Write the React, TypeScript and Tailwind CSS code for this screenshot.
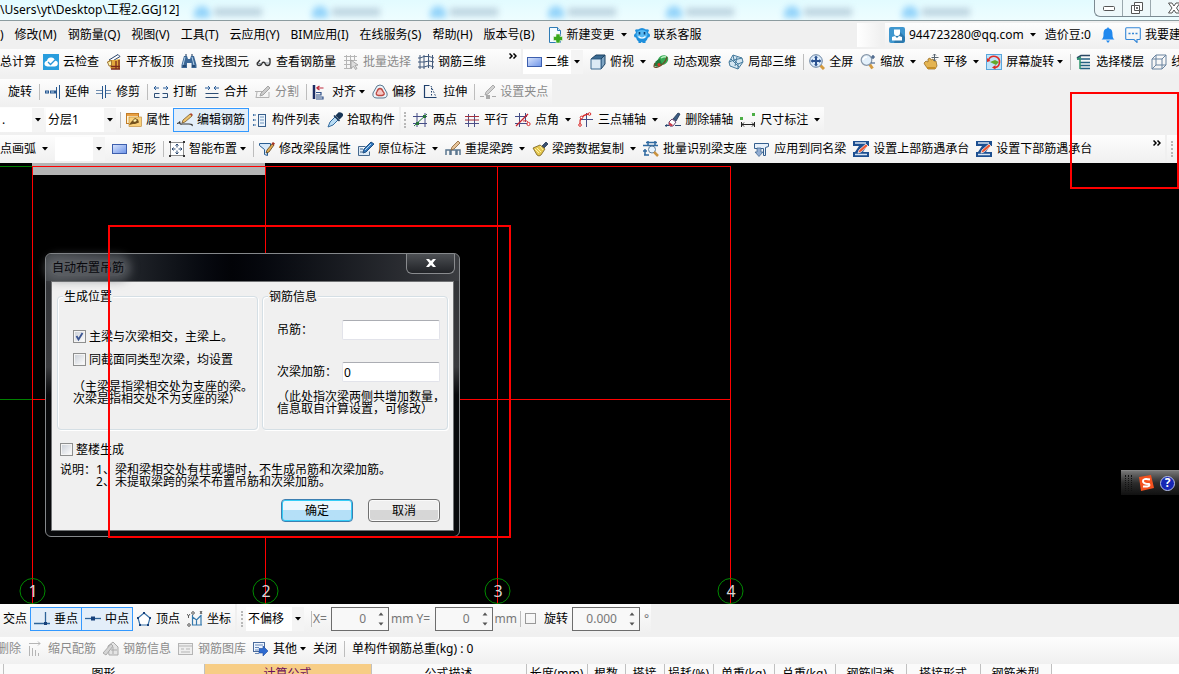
import { useState } from 'react';
import type { ReactNode } from 'react';

// 16x16 toolbar drawings
const icons: Record<string, ReactNode> = {
    newChange: (
        <>
            <path d="M2.500 .5h8l3 3v12h-11z" fill="#f4fbff" stroke="#2f7bb5" />
            <path d="M10.500 .5v3h3" fill="#cfe6f5" stroke="#2f7bb5" />
            <path d="M9 7h4v2.500h2.500v4H13V16H9v-2.500H6.500v-4H9z" fill="#3aa81c" stroke="#e9f7e4" strokeWidth=".6" />
        </>
    ),
    service: (
        <>
            <path d="M1 3q1.500-1 3-.5 4-3 8 0 1.500-.5 3 .5l-1 3q2.500 1 2 3-.5 1.500-2 1.500-1 3-2.500 4V16h-3v-.8H7V16H4.500v-1.500Q2.500 13 2 10.500.3 10.500 0 9q-.3-2 2-3z" fill="#1e8fdc" />
            <ellipse cx="8" cy="7.500" rx="5.500" ry="4.500" fill="#57b9f2" />
            <path d="M5.500 5v2.500M10.500 5v2.500" stroke="#083e73" strokeWidth="1.600" />
            <path d="M4.500 9.500q3.500 3 7 0" fill="none" stroke="#fff" strokeWidth="1.200" />
        </>
    ),
    user: (
        <>
            <rect width="16" height="16" rx="2" fill="#3f97cf" />
            <path d="M9 3l7 7v4l-2 2H5z" fill="#2c79ad" />
            <path d="M5 2.500h6V6q0 3-3 3T5 6z" fill="#fff" />
            <path d="M3 13.500V10l3-1 2 2 2-2 3 1v3.500z" fill="#fff" />
        </>
    ),
    bell: <path d="M8 0l1 1.500c3 .5 3.500 3 3.500 6 0 2.500.5 4 2 5H1.500c1.500-1 2-2.500 2-5 0-3 .5-5.500 3.500-6zM6 13.500h4L8 16z" fill="#2088ee" />,
    chat: (
        <>
            <path d="M3 .8H1.500Q.7.8.7 2v9.500q0 1 1 1H9l3 3v-3h2.300q1 0 1-1V2q0-1.200-1-1.200H3z" fill="none" stroke="#3487d8" strokeWidth="1.100" />
            <path d="M3.500 6.500h2M7 6.500h2M10.500 6.500h2" stroke="#3487d8" strokeWidth="1.300" />
        </>
    ),
    cloudCheck: (
        <>
            <rect width="16" height="16" fill="#299ddd" />
            <path d="M4.500 12.500Q1 12 1.500 9q.5-2 2.500-2.300Q5 3 8.500 3.500q2.500 0 3.500 3 3 .5 2.800 3.300-.3 2.700-3.300 2.700z" fill="#fff" />
            <path d="M5 8l2.500 2.500L12 6" fill="none" stroke="#2a95d8" strokeWidth="1.300" />
        </>
    ),
    alignTop: (
        <>
            <path d="M3 6L12 .5l2 2L5 8z" fill="#fff" stroke="#27426b" />
            <path d="M1 8l3-2h5l5-1v10H5l-2-4z" fill="#e2a83c" />
            <path d="M1.500 8l4-1.500v5L3 12z" fill="#fff2a8" stroke="#7c501e" strokeWidth=".7" />
            <path d="M5 12.500h9M5 15h9M10 7v8M13 6v9" stroke="#7c2a1c" strokeWidth="1.300" />
        </>
    ),
    binoculars: (
        <>
            <path d="M3 2h3l1 3h2l1-3h3l2.500 9v3h-5V9H6v5H.500v-3z" fill="#3b6796" />
            <path d="M4 3L2 11M11 3l2 8" stroke="#b5d1e9" />
            <path d="M2 12h3M11 12h3M4 1h2M10 1h2" stroke="#102f55" />
        </>
    ),
    glasses: (
        <>
            <path d="M1.500 8.500Q.5 11.500 3 11.500T6 9M1.500 9l2.500-3M9 8.500q0 3 2.500 3T14 8.500M6 9q1.500-1.500 3 0M14 9V5l-1.500-.5" fill="none" stroke="#333" strokeWidth="1.400" />
            <path d="M2 9.500h3.500M9.500 9h4" stroke="#8a97a5" />
        </>
    ),
    batchSelect: (
        <>
            <path d="M1 2.500h13M1 6.500h13M1 10.500h8M1 14.500h8M3.500 1v14M7.500 1v14M11.500 1v6" stroke="#b5b5b5" />
            <path d="M8 6l7 5-3 .5 2 3-1.500 1-1.800-3L8 14z" fill="#ddd" stroke="#999" strokeWidth=".8" />
        </>
    ),
    rebar3d: (
        <>
            <path d="M2 1v14M6 1v14M10.500 0v14M14.500 1v14" stroke="#41597b" />
            <path d="M0 4h2l4-1.500h5L16 4M0 8h6l5-1 5 1M0 13h6l5-1.500L16 13" fill="none" stroke="#41597b" />
        </>
    ),
    rect: (
        <>
            <defs>
                <linearGradient id="blueRect" x1="0" y1="0" x2="1" y2="1">
                    <stop offset="0" stopColor="#dbe6fc" />
                    <stop offset="1" stopColor="#6b92e8" />
                </linearGradient>
            </defs>
            <rect x=".5" y="3.500" width="14" height="9" fill="url(#blueRect)" stroke="#3d5fae" />
        </>
    ),
    cube: (
        <>
            <path d="M1 5l5-4h9l-4 4z" fill="#3a6a92" stroke="#1d4262" />
            <path d="M11 5l4-4v9l-4 5z" fill="#7ea4c2" stroke="#1d4262" />
            <path d="M1 5h10v10H1z" fill="#dceaf5" stroke="#3c6b92" />
        </>
    ),
    orbit: (
        <>
            <ellipse cx="10" cy="6" rx="5.500" ry="4.500" transform="rotate(-35 10 6)" fill="#35a852" />
            <path d="M8 4q3-2 5-1" fill="none" stroke="#baf0c0" strokeWidth="1.500" />
            <path d="M1 12q1-6 6-7l2 5q-2 4-8 2z" fill="#207b3b" />
            <path d="M2 9Q-1 15 5 13q7-3 9-10" fill="none" stroke="#6d4b28" strokeWidth="1.200" />
            <circle cx="6" cy="10.500" r="1.600" fill="#d93526" />
        </>
    ),
    local3d: (
        <>
            <path d="M1 8l4-7 9 3 1 4-5 7-8-3z" fill="#d4e6f2" stroke="#467b9d" />
            <path d="M5 1l1 5-5 2M6 6l8-2M6 6l4 4 5-2M10 10v5M9 3L7 12M3 5l8 8" fill="none" stroke="#467b9d" />
        </>
    ),
    fullScreen: (
        <>
            <path d="M11 11l4 4" stroke="#d49a3e" strokeWidth="3" />
            <circle cx="7" cy="7" r="6.300" fill="#dcebfa" stroke="#6882a0" />
            <path d="M7 1.500l2 2.300H8V6h2.200V5l2.300 2-2.300 2V8H8v2.200h1l-2 2.300-2-2.300h1V8H3.800v1L1.500 7l2.300-2v1H6V3.800H5z" fill="#2b5290" />
        </>
    ),
    zoomTool: (
        <>
            <path d="M9.500 10l3 4.500" stroke="#d49a3e" strokeWidth="3" />
            <circle cx="6.500" cy="6" r="5.300" fill="#e3f0fb" stroke="#8797a9" strokeWidth="1.200" />
            <path d="M3 6q1-3 4-3" fill="none" stroke="#fff" strokeWidth="1.500" />
            <path d="M11 3h4M13 1v4M11 9h4" stroke="#2b4d78" strokeWidth="1.200" />
        </>
    ),
    pan: (
        <>
            <path d="M1 9l2-2 2 1 0-3 2-1 1 2 2-1 1 2 2 0 1 5-2 3H5L2 11z" fill="#e4b452" stroke="#9a7026" strokeWidth=".8" />
            <path d="M4 13h8l1 2H4z" fill="#c58e28" />
            <path d="M11.500 0v7M8.500 3.500h7M10 1.500L11.500 0 13 1.500M10 5.500L11.500 7 13 5.500" fill="none" stroke="#56636f" />
        </>
    ),
    screenRotate: (
        <>
            <rect x=".5" y=".5" width="15" height="15" fill="#bfe3fa" stroke="#5aa6dc" />
            <path d="M4 8l5-2 4 2-3 3z" fill="#64a92c" />
            <path d="M2.500 6q2-4.500 7-3.500 4.500 1.500 4 6T9 13.500" fill="none" stroke="#e02b24" strokeWidth="1.600" />
            <path d="M9.500 11v4.500L6 13.500zM1 4l3.500 3L1 8z" fill="#e02b24" />
        </>
    ),
    floors: (
        <>
            <path d="M1 4l4-2.500h9" fill="none" stroke="#2b4864" strokeWidth="1.600" />
            <path d="M1 5h13M4 8.500h10M4 11.500h10M4 14.500h10" fill="none" stroke="#266083" strokeWidth="1.500" />
            <path d="M1 5l4-1.500M4 5v10" stroke="#2c956b" strokeWidth="1.500" />
        </>
    ),
    wireCube: (
        <path d="M1 5h10v10H1zM1 5l4-4h10L11 5M15 1v10l-4 4M5 1v10h10M5 11l-4 4" fill="none" stroke="#69839f" />
    ),
    extend: (
        <>
            <path d="M0 8h4M5 8h6" stroke="#27578f" strokeWidth="3" />
            <path d="M1 8h2M6 8h3" stroke="#b9d5ee" />
            <path d="M11.500 3v11M14.500 1v14" stroke="#27578f" />
        </>
    ),
    trim: (
        <>
            <path d="M0 6.500h6M0 9.500h6M10 6.500h5M10 9.500h5" stroke="#6e8caf" />
            <path d="M6.500 2v13M9.500 1v13" stroke="#27578f" />
        </>
    ),
    breakTool: (
        <>
            <path d="M1 4h5M10 4h5M3 2L1 4l2 2M13 2l2 2-2 2" fill="none" stroke="#2c5f9a" />
            <path d="M6.500 9.500h-5v4h5M9.500 9.500h5v4h-5" fill="#eef4fa" stroke="#2d4d74" />
        </>
    ),
    merge: (
        <>
            <path d="M1 4h5M10 4h5M4 2l2 2-2 2M12 2l-2 2 2 2" fill="none" stroke="#2c5f9a" />
            <path d="M1.500 9.500h13M1.500 13.500h13" stroke="#2d4d74" />
        </>
    ),
    split: (
        <>
            <path d="M0 7.500h7M1 13.500h13V8M2 8l-1 6" fill="none" stroke="#b3b3b3" />
            <path d="M5 12l1-3 7-7 2 2-7 7z" fill="#ccc" stroke="#a5a5a5" />
        </>
    ),
    align: (
        <>
            <path d="M2 1v14" stroke="#1c2d64" strokeWidth="2.500" />
            <path d="M4.500 4h7M4.500 4l3-2M4.500 4l3 2" stroke="#bd2b3c" strokeWidth="1.200" />
            <path d="M4 8.500h5v2.500H4M4 13h7v2H4" fill="none" stroke="#31528a" strokeWidth="1.200" />
        </>
    ),
    offset: (
        <>
            <path d="M5 2q3-2 6 0l4 7q1 5-4 5H5Q0 14 1 9z" fill="#edf4fa" stroke="#5a7991" />
            <path d="M8 4.500q2 0 3 3 3 3-1 4H6q-3-1-1-4 1-3 3-3z" fill="#f7c8c6" stroke="#bd4841" strokeWidth="1.300" />
        </>
    ),
    stretch: (
        <>
            <path d="M6.500 1.500h-5v12h12" fill="none" stroke="#1e3f6b" strokeWidth="1.200" />
            <path d="M8 2l5 11M8.500 4v9" stroke="#1e3f6b" strokeDasharray="1.500 1.500" />
        </>
    ),
    gripPoint: (
        <>
            <path d="M0 12.500h4M12 12.500h4" stroke="#aaa" />
            <path d="M6 8l7-7 2 2-7 7-3 1z" fill="#d2d2d2" stroke="#aaa" />
            <path d="M6 11h4v4H6z" fill="#aaa" />
        </>
    ),
    property: (
        <>
            <rect x=".5" y="1.500" width="12" height="10" fill="#fff2d0" stroke="#c27c27" />
            <path d="M1 3h11" stroke="#e89f41" strokeWidth="2" />
            <rect x="3" y="5" width="12.500" height="9.500" fill="#f9d07a" stroke="#b9812e" strokeWidth=".6" />
            <path d="M3 13l2-3 4-4 3 1.500 1 3-4 1.500-2 0z" fill="#75521d" />
            <path d="M7 9l2-2 2 1-2 2z" fill="#fff3b0" />
        </>
    ),
    editRebar: (
        <>
            <path d="M0 11.500q2 0 3-2-1 3 2 2.500h7q4 0 3 2" fill="none" stroke="#333" strokeWidth="1.200" />
            <path d="M5 11l1-3 7-6 2 2-7 6z" fill="#edc46d" stroke="#76582e" strokeWidth=".8" />
            <path d="M13 2l1-1 2 2-1 1z" fill="#b33e29" />
        </>
    ),
    list: (
        <>
            <path d="M1 3h3M1 8h3M1 13h3" stroke="#4576aa" strokeWidth="2" strokeDasharray="1.500 1" />
            <rect x="6.500" y="2.500" width="7" height="12" fill="#edf5fc" stroke="#385f8c" />
            <path d="M8 5h4M8 8h4M8 11h4" stroke="#7195bd" />
        </>
    ),
    dropper: (
        <>
            <path d="M1 15l2-5 5-5 3 3-5 5z" fill="#b9dcf4" stroke="#346c9f" />
            <path d="M7 3.500l5.500 5.500M9 4l3-3q2 0 3 1t-1 3l-2 2" fill="#173556" stroke="#173556" strokeWidth="1.500" />
        </>
    ),
    twoPoint: (
        <>
            <path d="M4 1v14M12 1v14M0 4.500h14M0 11.500h14" stroke="#444c86" />
            <path d="M1 14L14 2" stroke="#24753e" />
            <path d="M3 10h3v3H3zM10 3h3v3h-3z" fill="#27733a" />
        </>
    ),
    parallel: (
        <>
            <path d="M4.500 2v13M10.500 2v13M1 11.500h14" stroke="#4b4f88" />
            <path d="M1 4.500h14M1 8h14" stroke="#a52d39" />
        </>
    ),
    pointAngle: (
        <>
            <path d="M4.500 1v14M10.500 1v9M0 4.500h12M0 11.500h12" stroke="#444c86" />
            <path d="M1 14L13 2" stroke="#c5222e" strokeWidth="1.200" />
            <path d="M8 9q4-1 5 1" fill="none" stroke="#d92b2b" />
            <circle cx="13.500" cy="12" r="1.600" fill="#fff" stroke="#d92b2b" />
        </>
    ),
    threePoint: (
        <>
            <path d="M8.500 1v14M2 7.500h13" stroke="#444c86" />
            <path d="M2 12Q1 4 10 2" fill="none" stroke="#d92b2b" strokeWidth="1.300" />
            <circle cx="2" cy="13" r="1.300" fill="#fff" stroke="#d92b2b" />
            <circle cx="3.500" cy="5.500" r="1.300" fill="#fff" stroke="#d92b2b" />
            <circle cx="11.500" cy="2" r="1.300" fill="#fff" stroke="#d92b2b" />
        </>
    ),
    eraseAxis: (
        <>
            <path d="M0 13.500h5M10 13.500h6M2 12l-1 3" stroke="#29476f" />
            <path d="M8 7l5-6 2 1-4 7z" fill="#3b5c83" stroke="#1f3350" strokeWidth=".8" />
            <path d="M4 10l3-3 4 3-3 4q-3 1-4-1z" fill="#fff" stroke="#6a4a75" />
            <path d="M4 10l4 3-1 1q-3 0-3-2z" fill="#c93b48" />
        </>
    ),
    dimension: (
        <>
            <path d="M1.500 10v5M14.500 10v5M2 12.500h12M4 10.500l-2 2 2 2M12 10.500l2 2-2 2" fill="none" stroke="#222" />
            <path d="M0 5h3v3H0zM12 1h3v3h-3z" fill="#4cae45" />
        </>
    ),
    smart: (
        <>
            <rect x="1.500" y="1.500" width="13" height="13" fill="#fff" stroke="#222" strokeDasharray="1 1" />
            <path d="M8 3v3.500M8 13V9.500M3 8h3.500M13 8H9.500M6.500 4.500L8 3l1.500 1.500M6.500 11.500L8 13l1.500-1.500M4.500 6.500L3 8l1.500 1.500M11.500 6.500L13 8l-1.500 1.500" fill="none" stroke="#28466e" />
            <path d="M0 0h2v2H0zM14 0h2v2h-2zM0 14h2v2H0zM14 14h2v2h-2z" fill="#333" />
        </>
    ),
    beamProp: (
        <>
            <path d="M.5 2.500h11v4l-3 3v5l-3-1v-5l-5-4z" fill="#d7e8f8" stroke="#285c91" />
            <path d="M7 12l1-3 5-6 2 1-5 7z" fill="#e3ac52" stroke="#5b4220" strokeWidth=".8" />
            <path d="M12.500 2.500L14 1l2 1.500-1.500 2z" fill="#a53526" />
        </>
    ),
    inPlace: (
        <>
            <path d="M.5 5.500h7M.5 5.500v9h11v-4" fill="#dbe9f5" stroke="#46698e" />
            <path d="M2 8h3M2 11h3" stroke="#46698e" />
            <path d="M5 12l1-4 7-7 3 2-8 8z" fill="#3278bd" stroke="#1e4f83" />
            <path d="M7 9l6-6" stroke="#b9d7f1" />
        </>
    ),
    respan: (
        <>
            <path d="M1 14V9h4v5M6 14V9h5v5M12 14V9h3v5" fill="none" stroke="#5b7790" strokeWidth="1.500" />
            <path d="M6 9l1-3 6-6 2 2-6 6z" fill="#e6c398" stroke="#8c6235" strokeWidth=".8" />
        </>
    ),
    brush: (
        <>
            <path d="M10 5l4-4 2 2-4 4z" fill="#395070" stroke="#223650" strokeWidth=".8" />
            <path d="M1 7l7-3 5 4-4 6q-2 2-4 0z" fill="#e5c74f" stroke="#755e20" strokeWidth=".8" />
            <path d="M3 8l4 4M5 7l4 4M8 5l3 4" stroke="#fff3a7" />
        </>
    ),
    identify: (
        <>
            <path d="M3 1.500h11M0 4.500h15M5 0v5M12 0v5M0 10h4M1 14h5M2 8v6" stroke="#2e69a0" strokeWidth="1.500" />
            <circle cx="9" cy="8.500" r="3.500" fill="#e6f4ff" stroke="#587999" />
            <path d="M11 11l4 4" stroke="#ca933f" strokeWidth="2.500" />
        </>
    ),
    applyBeam: (
        <>
            <path d="M.5 2.500h14v3l-3 1v8h-2v-7h-9z" fill="#e7f0fa" stroke="#345f8e" />
            <path d="M3 7v4H1l4 4.500L9 11H7V7z" fill="#92add2" stroke="#345f8e" strokeWidth=".7" />
        </>
    ),
    cap: (
        <>
            <path d="M0 0h16v5h-2l-4 6h6v5H0v-5h2l4-6H0z" fill="#1d4f91" />
            <path d="M2 2h11M2 13.500h12" stroke="#d5e4f4" strokeWidth="1.300" />
            <path d="M5 12l1-3 7-6 2 2-7 6z" fill="#ee5733" stroke="#fff" strokeWidth=".7" />
        </>
    ),
    perpendicular: (
        <>
            <path d="M0 12.500h16M11.500 1v11" stroke="#2e6499" strokeWidth="1.300" />
            <path d="M10 11h3v3h-3z" fill="#17407a" />
        </>
    ),
    middle: (
        <>
            <path d="M0 7.500h16" stroke="#2e6499" strokeWidth="1.300" />
            <path d="M6 5.500h4v4H6z" fill="#17407a" />
        </>
    ),
    vertex: (
        <>
            <path d="M8 2l6 5-2 7H4L2 7z" fill="#fff" stroke="#3a72a8" strokeWidth="1.200" />
            <path d="M7 1h2v2H7zM1 6h2v2H1zM13 6h2v2h-2zM3 13h2v2H3zM11 13h2v2h-2z" fill="#17407a" />
        </>
    ),
    coord: (
        <>
            <path d="M5.500 4v10H15M5.500 6l4 3 5-5M9.500 9v5M14 4v10" fill="none" stroke="#3579ad" strokeWidth="1.200" />
            <circle cx="2" cy="14" r="1.300" fill="none" stroke="#333" strokeWidth=".8" />
            <path d="M0 3l1.500 2L3 3M1.500 5v2M13 0l2 3M15 0l-2 3" fill="none" stroke="#333" strokeWidth=".8" />
            <circle cx="6" cy="2" r="1.300" fill="none" stroke="#333" strokeWidth=".8" />
        </>
    ),
    scaleRebar: (
        <path d="M1 2.500h11M10 .5l2 2-2 2M1.500 5v10M4.500 7v8M7.500 9v6M10.500 12v3" fill="none" stroke="#b5b5b5" />
    ),
    rebarInfo: (
        <>
            <path d="M5 5l5-4 5 5v8H6z" fill="#e4e4e4" stroke="#aaa" />
            <path d="M0 12l8-9 2 2-7 9zM8 9h6M10 6v7" fill="#d5d5d5" stroke="#aaa" />
        </>
    ),
    rebarLib: (
        <>
            <rect x=".5" y="2.500" width="14" height="11" fill="#eee" stroke="#b5b5b5" />
            <path d="M1 5h13M3 8h3M8 8h4M3 11h9" stroke="#b5b5b5" />
        </>
    ),
    other: (
        <>
            <rect x=".5" y="1.500" width="11" height="9" fill="#eef5ff" stroke="#4a6b9c" />
            <path d="M2 4h8M2 6.500h4M2 9h3M2 12.500h4" stroke="#6688b8" />
            <path d="M6 7.500h4V5l5 5-5 5v-3H6z" fill="#2f6bd0" stroke="#1e4b9b" strokeWidth=".6" />
        </>
    ),
};

function Icon({ name }: { name: string }) {
    return (
        <svg viewBox="0 0 16 16" className="w-4 h-4 shrink-0" aria-hidden="true">
            {icons[name]}
        </svg>
    );
}

function Arrow() {
    return (
        <svg viewBox="0 0 6 4" className="w-1.5 h-1 shrink-0" aria-hidden="true">
            <path d="M0 0h6L3 3.500z" fill="#000" />
        </svg>
    );
}

type ToolProps = {
    icon?: string;
    label: string;
    menu?: 'wide' | 'tight';
    active?: boolean;
    disabled?: boolean;
};

function Tool({ icon, label, menu, active, disabled }: ToolProps) {
    return (
        <button
            type="button"
            disabled={disabled}
            className={`flex items-center gap-1 h-6 shrink-0 whitespace-nowrap ${
                active ? '-mx-1 px-[3px] border border-[#3399ff] bg-[#e3eef9]' : ''
            } ${disabled ? 'text-[#8b8b8b]' : ''}`}
        >
            {icon && <Icon name={icon} />}
            <span>{label}</span>
            {menu && (
                <span className={menu === 'wide' ? 'ml-0.5' : '-ml-px'}>
                    <Arrow />
                </span>
            )}
        </button>
    );
}

function Sep() {
    return <div className="w-px h-4 bg-[#bdbdbd] -mr-0.5 shrink-0" />;
}

function Grip() {
    return <div className="w-0 h-4 border-l-2 border-dotted border-[#b8b8b8] shrink-0" />;
}

function Combo({ label, options, className, icon }: { label: string; options: string[]; className: string; icon?: string }) {
    return (
        <div className={`relative flex items-center h-6 bg-white shrink-0 ${className}`}>
            {icon && <Icon name={icon} />}
            <select aria-label={label} className="appearance-none flex-1 min-w-0 h-full pl-0.5 bg-transparent outline-none">
                {options.map(o => (
                    <option key={o}>{o}</option>
                ))}
            </select>
            <span className="absolute right-0 top-0 flex items-center h-full px-[3px] bg-[#f4f4f4] pointer-events-none">
                <Arrow />
            </span>
        </div>
    );
}

function Spinner({ label, value, className }: { label: string; value: string; className: string }) {
    return (
        <div className={`flex items-center h-6 border border-[#6d6d6d] bg-[#f8f8f8] text-[#777] shrink-0 ${className}`}>
            <input aria-label={label} defaultValue={value} className="flex-1 min-w-0 h-full bg-transparent text-right outline-none pr-3" />
            <div className="flex flex-col justify-between h-full py-1 pr-1">
                <button type="button" aria-label={`${label} +`}>
                    <svg viewBox="0 0 6 4" className="block w-1.5 h-1"><path d="M.5 3.500h5L3 .5z" fill="#555" /></svg>
                </button>
                <button type="button" aria-label={`${label} -`}>
                    <svg viewBox="0 0 6 4" className="block w-1.5 h-1"><path d="M.5 .5h5L3 3.500z" fill="#555" /></svg>
                </button>
            </div>
        </div>
    );
}

const strip = 'flex items-center bg-linear-to-b from-[#fdfdfd] to-[#f0f0f0] overflow-hidden';
const panel = `${strip} gap-[7px]`;

function TitleBar() {
    return (
        <div className="relative flex h-[21px] bg-linear-to-b from-[#e2fbff] to-[#eefdff] border-b border-[#8c9ca0] shrink-0 overflow-hidden">
            <div className="w-[194px] shrink-0 leading-[19px] whitespace-nowrap">\Users\yt\Desktop\工程2.GGJ12]</div>
            <div className="flex flex-1 items-center pt-1 blur-[3px]">
                {[0, 1, 2, 3, 4, 5, 6].map(i => (
                    <div key={i} className="flex items-center gap-1 w-[118px] shrink-0">
                        <div className="w-4 h-3 rounded-t-full bg-[#93d3fa]" />
                        <div className="w-12 h-2 bg-[#bcd3e0]" />
                    </div>
                ))}
            </div>
            <div className="absolute right-0 top-0 flex h-[17px] w-[85px] border-l border-b border-[#7b8a92] rounded-bl-md bg-[#eef8fa]">
                <button type="button" aria-label="最小化" className="flex items-center justify-center w-7 border-r border-[#9aa7ad]">
                    <svg viewBox="0 0 12 5" className="w-3 h-[5px]"><rect x=".5" y=".5" width="11" height="4" rx="1" fill="#fff" stroke="#555" /></svg>
                </button>
                <button type="button" aria-label="还原" className="flex items-center justify-center w-7 border-r border-[#9aa7ad]">
                    <svg viewBox="0 0 12 12" className="w-3 h-3">
                        <path d="M3.500.5h8v8h-3v3h-8v-8h3z" fill="#fff" stroke="#555" />
                        <path d="M3.500 3.500h5v5h-5z" fill="none" stroke="#555" />
                        <path d="M5.500 5.500h1v1h-1z" stroke="#555" />
                    </svg>
                </button>
                <button type="button" aria-label="关闭" className="flex flex-1 items-center justify-end">
                    <svg viewBox="0 0 11 12" className="w-[11px] h-3">
                        <path d="M.5 1h3.500L6 4l2-3h4L8.500 6 12 11H8L6 8l-2 3H.5L4 6z" fill="#fff" stroke="#555" />
                    </svg>
                </button>
            </div>
        </div>
    );
}

const menus = ['修改(M)', '钢筋量(Q)', '视图(V)', '工具(T)', '云应用(Y)', 'BIM应用(I)', '在线服务(S)', '帮助(H)', '版本号(B)'];

function MenuBar() {
    return (
        <div className="flex h-7 items-center shrink-0">
            <nav className="flex items-center gap-[11px] shrink-0">
                <button type="button">)</button>
                {menus.map(m => (
                    <button key={m} type="button" className="whitespace-nowrap">{m}</button>
                ))}
            </nav>
            <div className="flex items-center gap-[7px] pl-3">
                <Tool icon="newChange" label="新建变更" menu="wide" />
                <Tool icon="service" label="联系客服" />
            </div>
            <div className="ml-auto w-6 h-6 bg-linear-to-r from-white to-[#f0f0f0] shrink-0" />
            <div className={`${strip} gap-[9px] ml-1 w-[294px] h-6 pl-1 shrink-0`}>
                <Tool icon="user" label="944723280@qq.com" menu="wide" />
                <Tool label="造价豆:0" />
                <button type="button" aria-label="消息"><Icon name="bell" /></button>
                <Tool icon="chat" label="我要建议" />
            </div>
        </div>
    );
}

function Toolbars() {
    return (
        <div className="shrink-0 overflow-hidden">
            <div className="flex gap-0.5 h-[26px]">
                <div className={`${panel} shrink-0 pr-1`}>
                    <Tool label="总计算" />
                    <Tool icon="cloudCheck" label="云检查" />
                    <Tool icon="alignTop" label="平齐板顶" />
                    <Tool icon="binoculars" label="查找图元" />
                    <Tool icon="glasses" label="查看钢筋量" />
                    <Tool icon="batchSelect" label="批量选择" disabled />
                    <Tool icon="rebar3d" label="钢筋三维" />
                    <More />
                </div>
                <div className={`${panel} flex-1`}>
                    <Combo label="视图" options={['二维', '三维']} icon="rect" className="w-[60px] pl-1" />
                    <Tool icon="cube" label="俯视" menu="wide" />
                    <Tool icon="orbit" label="动态观察" />
                    <Tool icon="local3d" label="局部三维" />
                    <Sep />
                    <Tool icon="fullScreen" label="全屏" />
                    <Tool icon="zoomTool" label="缩放" menu="wide" />
                    <Tool icon="pan" label="平移" menu="wide" />
                    <Tool icon="screenRotate" label="屏幕旋转" menu="tight" />
                    <Sep />
                    <Tool icon="floors" label="选择楼层" />
                    <Tool icon="wireCube" label="线框" />
                </div>
            </div>

            <div className="flex h-[26px] mt-1">
                <div className={`${panel} pl-2 pr-1 shrink-0`}>
                    <Tool label="旋转" />
                    <Sep />
                    <Tool icon="extend" label="延伸" />
                    <Tool icon="trim" label="修剪" />
                    <Sep />
                    <Tool icon="breakTool" label="打断" />
                    <Tool icon="merge" label="合并" />
                    <Tool icon="split" label="分割" disabled />
                    <Sep />
                    <Tool icon="align" label="对齐" menu="tight" />
                    <Tool icon="offset" label="偏移" />
                    <Tool icon="stretch" label="拉伸" />
                    <Sep />
                    <Tool icon="gripPoint" label="设置夹点" disabled />
                </div>
            </div>

            <div className="flex gap-0.5 h-[26px] mt-0.5">
                <div className={`${panel} pr-1 shrink-0`}>
                    <div className="flex gap-0.5 -mr-[3px]">
                        <Combo label="楼层" options={['.']} className="w-11" />
                        <Combo label="分层" options={['分层1', '分层2']} className="w-[70px]" />
                    </div>
                    <Sep />
                    <Tool icon="property" label="属性" />
                    <Tool icon="editRebar" label="编辑钢筋" active />
                    <Tool icon="list" label="构件列表" />
                    <Tool icon="dropper" label="拾取构件" />
                </div>
                <div className={`${panel} pl-[3px] pr-1 shrink-0`}>
                    <Grip />
                    <Tool icon="twoPoint" label="两点" />
                    <Tool icon="parallel" label="平行" />
                    <Tool icon="pointAngle" label="点角" menu="wide" />
                    <Tool icon="threePoint" label="三点辅轴" menu="wide" />
                    <Tool icon="eraseAxis" label="删除辅轴" />
                    <Tool icon="dimension" label="尺寸标注" menu="wide" />
                </div>
            </div>

            <div className="flex gap-0.5 h-7 mt-0.5">
                <div className={`${panel} flex-1 pr-1`}>
                    <Tool label="点画弧" menu="wide" />
                    <Combo label="画法" options={['']} className="w-[50px]" />
                    <Tool icon="rect" label="矩形" />
                    <Sep />
                    <Tool icon="smart" label="智能布置" menu="tight" />
                    <Sep />
                    <Tool icon="beamProp" label="修改梁段属性" />
                    <Tool icon="inPlace" label="原位标注" menu="wide" />
                    <Tool icon="respan" label="重提梁跨" menu="wide" />
                    <Tool icon="brush" label="梁跨数据复制" menu="wide" />
                    <Tool icon="identify" label="批量识别梁支座" />
                    <Tool icon="applyBeam" label="应用到同名梁" />
                    <Tool icon="cap" label="设置上部筋遇承台" />
                    <Tool icon="cap" label="设置下部筋遇承台" />
                    <More />
                </div>
                <div className={`${panel} w-3 pl-1 shrink-0`}>
                    <Grip />
                </div>
            </div>
        </div>
    );
}

function More() {
    return (
        <button type="button" aria-label="更多" className="ml-auto pl-4 pb-3 shrink-0">
            <svg viewBox="0 0 8 6" className="w-2 h-1.5">
                <path d="M.5.5L3 3 .5 5.500M4.500.5L7 3 4.500 5.500" fill="none" stroke="#000" strokeWidth="1.500" />
            </svg>
        </button>
    );
}

const axes = [32, 265, 497, 730];

function AxisGrid() {
    return (
        <svg className="absolute left-0 top-0 w-full h-full" aria-hidden="true">
            <rect x="32" y="0" width="233" height="12" fill="#b4b4b4" />
            <g shapeRendering="crispEdges">
                <path d="M0 236.500h32M0 3.500h32" stroke="#008000" />
                <path d="M32 236.500h699M32 3.500h699" stroke="#ff0000" />
                {axes.map(x => (
                    <path key={x} d={`M${x}.5 3v438`} stroke="#ff0000" />
                ))}
            </g>
            {axes.map((x, i) => (
                <g key={x}>
                    <circle cx={x + 0.5} cy="428" r="12.500" fill="none" stroke="#008a00" />
                    <text x={x + 1} y="434" textAnchor="middle" fontSize="16" fill="#d4d4d4">{i + 1}</text>
                </g>
            ))}
        </svg>
    );
}

function Check({ label, checked, onChange }: { label: string; checked: boolean; onChange: () => void }) {
    return (
        <label className="flex items-center gap-[3px] h-[13px] whitespace-nowrap">
            <span className="relative w-[13px] h-[13px] shrink-0">
                <input
                    type="checkbox"
                    checked={checked}
                    onChange={onChange}
                    className="block appearance-none w-[13px] h-[13px] border border-[#8e8f8f] bg-linear-to-br from-[#c9ced6] to-white outline-1 -outline-offset-2 outline-[#f4f4f4]"
                />
                {checked && (
                    <svg viewBox="0 0 13 13" className="absolute inset-0 pointer-events-none">
                        <path d="M3.500 6l2 3.500L9.500 3" fill="none" stroke="#3b5592" strokeWidth="1.800" />
                    </svg>
                )}
            </span>
            {label}
        </label>
    );
}

function HangerDialog() {
    const [onMain, setOnMain] = useState(true);
    const [sameSection, setSameSection] = useState(false);
    const [wholeFloor, setWholeFloor] = useState(false);
    const field = 'w-[98px] h-5 px-px border border-[#e2e3ea] border-t-[#abadb3] rounded-xs bg-white outline-none';
    const box = 'relative border border-[#d5dfe5] rounded-sm shadow-[inset_1px_1px_0_#fff,1px_1px_0_#fff] h-[134px]';
    const legend = 'absolute left-[5px] -top-2 px-px bg-[#f0f0f0] leading-4';

    return (
        <section
            role="dialog"
            aria-label="自动布置吊筋"
            className="absolute left-[45px] top-[90px] w-[415px] px-[5px] pb-[5px] border border-[#85888b] rounded-md bg-linear-to-b from-[#303236] via-[#3a3b3e] via-40% to-[#08090b] to-50%"
        >
            <header className="flex justify-between h-[27px] -mx-[5px] pl-1 rounded-t-md bg-linear-to-r from-[#42464a] via-[#020307] via-45% to-[#3b3d41]">
                <h2 className="self-center px-0.5 rounded-full text-[#08080d] bg-[#6e7276]/60 shadow-[0_0_8px_5px_#6e727699]">自动布置吊筋</h2>
                <button
                    type="button"
                    aria-label="关闭"
                    className="flex justify-center w-[49px] h-5 pt-1 mr-1 border border-t-0 border-[#898b8e] rounded-b-md bg-linear-to-b from-[#4d5054] to-[#212327]"
                >
                    <svg viewBox="0 0 12 10" className="w-3 h-2.5">
                        <path d="M1 1h3l2 2 2-2h3L7.800 5 11 9H8L6 7 4 9H1l3.200-4z" fill="#fff" />
                    </svg>
                </button>
            </header>
            <div className="px-[5px] pt-[14px] pb-2 border border-[#707274] bg-[#f0f0f0] leading-3">
                <div className="flex gap-1">
                    <div className={`${box} w-[201px] px-[15px] pt-[33px]`}>
                        <span className={legend}>生成位置</span>
                        <div className="flex flex-col gap-2.5">
                            <Check label="主梁与次梁相交，主梁上。" checked={onMain} onChange={() => setOnMain(!onMain)} />
                            <Check label="同截面同类型次梁，均设置" checked={sameSection} onChange={() => setSameSection(!sameSection)} />
                        </div>
                        <p className="mt-[15px] whitespace-nowrap">
                            （主梁是指梁相交处为支座的梁。<br />次梁是指相交处不为支座的梁）
                        </p>
                    </div>
                    <div className={`${box} w-[186px] pl-3.5 pr-[7px] pt-[23px]`}>
                        <span className={legend}>钢筋信息</span>
                        <div className="flex flex-col gap-[22px]">
                            <label className="flex items-center justify-between">吊筋：<input className={field} /></label>
                            <label className="flex items-center justify-between whitespace-nowrap">次梁加筋：<input defaultValue="0" className={field} /></label>
                        </div>
                        <p className="mt-[9px] whitespace-nowrap">
                            （此处指次梁两侧共增加数量，<br />信息取自计算设置，可修改）
                        </p>
                    </div>
                </div>
                <div className="mt-[13px] px-[3px]">
                    <Check label="整楼生成" checked={wholeFloor} onChange={() => setWholeFloor(!wholeFloor)} />
                    <div className="flex mt-2 whitespace-nowrap">
                        <span>说明：</span>
                        <ol>
                            <li>1、梁和梁相交处有柱或墙时，不生成吊筋和次梁加筋。</li>
                            <li>2、未提取梁跨的梁不布置吊筋和次梁加筋。</li>
                        </ol>
                    </div>
                </div>
                <div className="flex justify-end gap-[15px] mt-[11px] pr-2">
                    <button type="button" className="w-[72px] h-[23px] border border-[#3c7fb1] rounded-sm bg-linear-to-b from-[#ecf7fd] from-50% to-[#b5e0f8] to-50% shadow-[inset_0_0_0_1px_#35cdf7]">确定</button>
                    <button type="button" className="w-[72px] h-[23px] border border-[#707070] rounded-sm bg-linear-to-b from-[#efefef] from-50% to-[#d6d6d6] to-50% shadow-[inset_0_0_0_1px_#fafafa]">取消</button>
                </div>
            </div>
        </section>
    );
}

function ImeBar() {
    return (
        <div className="absolute right-0 top-[307px] flex items-center gap-1.5 w-[58px] h-[25px] pl-1 overflow-hidden border-t border-[#888] bg-linear-to-b from-[#777] via-[#2c2c2c] to-[#111]">
            <div className="flex gap-0.5 shrink-0">
                <i className="w-0 h-4 border-l border-dotted border-[#111]" />
                <i className="w-0 h-4 border-l border-dotted border-[#111]" />
                <i className="w-0 h-4 border-l border-dotted border-[#111]" />
            </div>
            <svg viewBox="0 0 16 16" className="w-4 h-4 shrink-0" aria-hidden="true">
                <path d="M1 2l12-2 3 13-13 3z" fill="#f4511e" />
                <path d="M12 4.500Q5 3 5 6t6 3q2 3-6 2.500" fill="none" stroke="#fff" strokeWidth="2" />
            </svg>
            <button type="button" className="w-[15px] h-[15px] rounded-full border border-[#b9c3e8] bg-[#1727b4] text-white font-bold leading-3 shrink-0">?</button>
        </div>
    );
}

function Annotations() {
    return (
        <>
            <div className="absolute left-[108px] top-[225px] w-[403px] h-[313px] border-2 border-[#ff0000] pointer-events-none" />
            <div className="absolute right-0 top-[92px] w-[109px] h-[97px] border-2 border-[#ff0000] pointer-events-none" />
        </>
    );
}

const columns = [
    { name: '', width: 'w-[3px]' },
    { name: '图形', width: 'w-[201px]' },
    { name: '计算公式', width: 'w-[167px]' },
    { name: '公式描述', width: 'w-[155px]' },
    { name: '长度(mm)', width: 'w-[61px]' },
    { name: '根数', width: 'w-[38px]' },
    { name: '搭接', width: 'w-[39px]' },
    { name: '损耗(%)', width: 'w-[49px]' },
    { name: '单重(kg)', width: 'w-[61px]' },
    { name: '总重(kg)', width: 'w-[61px]' },
    { name: '钢筋归类', width: 'w-[71px]' },
    { name: '搭接形式', width: 'w-[74px]' },
    { name: '钢筋类型', width: 'w-[71px]' },
];

function BottomPanels() {
    return (
        <div className="shrink-0 overflow-hidden">
            <div className="flex gap-0.5 h-[33px] pb-1">
                <div className={`${panel} pl-[3px] pr-1 shrink-0`}>
                    <Tool label="交点" />
                    <Tool icon="perpendicular" label="垂点" active />
                    <Tool icon="middle" label="中点" active />
                    <Tool icon="vertex" label="顶点" />
                    <Tool icon="coord" label="坐标" />
                </div>
                <div className={`${panel} pl-1 pr-0.5 text-[#777] shrink-0`}>
                    <Grip />
                    <div className="flex -ml-1 text-black">
                        <Combo label="偏移方式" options={['不偏移', '正交', '极坐标']} className="w-[58px]" />
                    </div>
                    <Sep />
                    <div className="flex items-center gap-0.5 -ml-1">
                        <span className="w-4">X=</span>
                        <Spinner label="X" value="0" className="w-[58px]" />
                        <span>mm</span>
                    </div>
                    <div className="flex items-center gap-0.5 -ml-1">
                        <span className="w-4">Y=</span>
                        <Spinner label="Y" value="0" className="w-[58px]" />
                        <span>mm</span>
                    </div>
                    <div className="flex items-center gap-1 -ml-1">
                        <div className="w-px h-4 bg-[#bdbdbd]" />
                        <label className="flex items-center gap-2 text-black">
                            <input type="checkbox" className="appearance-none w-[11px] h-[11px] border border-[#999]" />
                            旋转
                        </label>
                        <Spinner label="旋转角度" value="0.000" className="w-[68px]" />
                        <span>°</span>
                    </div>
                </div>
            </div>
            <div className={`${panel} h-[27px] pb-[3px]`}>
                <div className="flex -ml-[3px]"><Tool label="删除" disabled /></div>
                <Tool icon="scaleRebar" label="缩尺配筋" disabled />
                <Tool icon="rebarInfo" label="钢筋信息" disabled />
                <Tool icon="rebarLib" label="钢筋图库" disabled />
                <Tool icon="other" label="其他" menu="tight" />
                <Tool label="关闭" />
                <Sep />
                <span className="pl-0.5 whitespace-nowrap">单构件钢筋总重(kg) : 0</span>
            </div>
            <div className="h-2.5 bg-white overflow-hidden">
                <table className="table-fixed border-collapse w-[1051px]">
                    <thead>
                        <tr>
                            {columns.map(c => (
                                <th
                                    key={c.name}
                                    className={`${c.width} h-5 p-0 border-r border-[#c0c0c0] font-normal leading-5 whitespace-nowrap ${
                                        c.name === '计算公式' ? 'bg-[#f7cd85] text-[#6b0f5c]' : 'bg-[#fafafa]'
                                    }`}
                                >
                                    {c.name}
                                </th>
                            ))}
                        </tr>
                    </thead>
                </table>
            </div>
        </div>
    );
}

export default function App() {
    return (
        <div className="relative flex flex-col h-screen overflow-hidden bg-[#f0f0f0] text-black text-[12px] leading-4 font-['Noto_Sans','Noto_Sans_CJK_SC',sans-serif]">
            <TitleBar />
            <MenuBar />
            <Toolbars />
            <main className="relative flex-1 min-h-0 overflow-hidden bg-black">
                <AxisGrid />
                <HangerDialog />
                <ImeBar />
            </main>
            <BottomPanels />
            <Annotations />
        </div>
    );
}
